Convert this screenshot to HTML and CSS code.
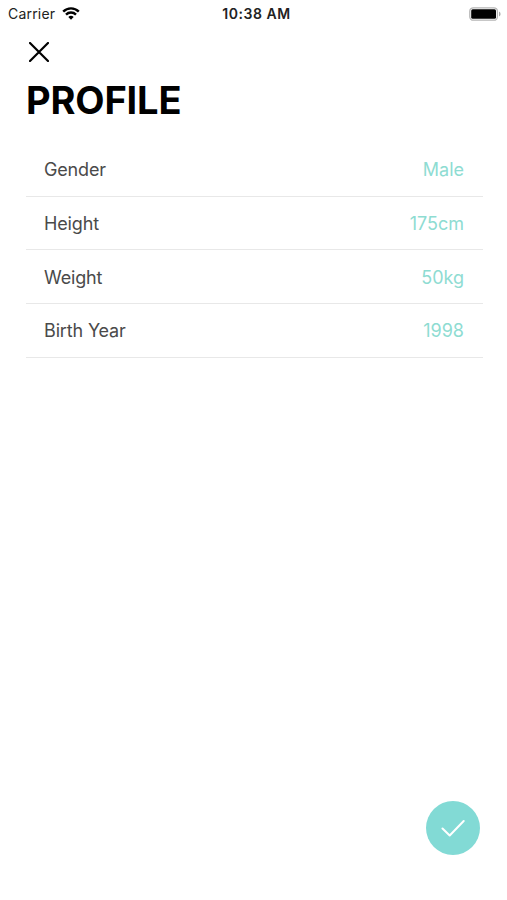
FILE: index.html
```html
<!DOCTYPE html>
<html lang="en">
<head>
    <meta charset="UTF-8">
    <meta name="viewport" content="width=device-width, initial-scale=1.0">
    <title>Profile</title>
    <link rel="stylesheet" href="styles.css">
</head>
<body>
    <div class="screen">
        <div class="status-bar">
            <div class="carrier">
                <span>Carrier</span>
                <svg class="wifi" viewBox="0 0 18 13" width="18" height="13">
                    <path d="M1.2 4.6a11 11 0 0 1 15.6 0" />
                    <path d="M4 7.6a7.1 7.1 0 0 1 10 0" />
                    <path class="wifi-dot" d="M9 12.8L6.3 9.9a4 4 0 0 1 5.4 0z" />
                </svg>
            </div>
            <div class="time">10:38 AM</div>
            <svg class="battery" viewBox="0 0 32 14" width="32" height="14">
                <rect class="battery-case" x=".8" y=".8" width="27.6" height="12.4" rx="3.5" />
                <rect x="2.2" y="2.2" width="24.8" height="9.6" rx="1.5" />
                <path class="battery-cap" d="M30 4.5q1.6 .8 1.6 2.5t-1.6 2.5z" />
            </svg>
        </div>

        <button class="close-btn" aria-label="Close">
            <svg viewBox="0 0 20 20" width="20" height="20">
                <path d="M1 1l18 18M19 1L1 19" />
            </svg>
        </button>

        <h1>PROFILE</h1>

        <ul class="profile-list">
            <li class="profile-row">
                <span class="label">Gender</span>
                <span class="value">Male</span>
            </li>
            <li class="profile-row">
                <span class="label">Height</span>
                <span class="value">175cm</span>
            </li>
            <li class="profile-row">
                <span class="label">Weight</span>
                <span class="value">50kg</span>
            </li>
            <li class="profile-row">
                <span class="label">Birth Year</span>
                <span class="value">1998</span>
            </li>
        </ul>

        <button class="save-btn" aria-label="Save">
            <svg viewBox="0 0 24 18" width="24" height="18">
                <path d="M1.5 9.5l7.2 7L22.7 2" />
            </svg>
        </button>
    </div>
</body>
</html>
```

FILE: styles.css
```css
* {
    box-sizing: border-box;
}

body {
    margin: 0;
    font-family: Inter, 'Liberation Sans', sans-serif;
    background-color: #fff;
    color: #000;
}

.screen {
    display: flex;
    flex-direction: column;
    height: 900px;
    padding: 0 24px 45px 26px;
}

/* status bar */
.status-bar {
    display: grid;
    grid-template-columns: 1fr auto 1fr;
    align-items: center;
    height: 27px;
    margin: 0 -18px;
    color: #222;
}

.carrier {
    display: flex;
    align-items: center;
    gap: 7px;
    font-size: 14px;
    letter-spacing: 0.2px;
}

.wifi {
    fill: none;
    stroke: #000;
    stroke-width: 2.4;
}

.wifi .wifi-dot {
    fill: #000;
    stroke: none;
}

.time {
    padding-left: 4px;
    font-size: 14px;
    font-weight: 600;
    letter-spacing: 0.55px;
}

.battery {
    justify-self: end;
}

.battery-case {
    fill: none;
    stroke: #b5b5b5;
    stroke-width: 1.3;
}

.battery-cap {
    fill: #aaa;
}

button {
    display: flex;
    align-items: center;
    justify-content: center;
    padding: 0;
    border: none;
    background: none;
}

button svg {
    fill: none;
    stroke-linecap: round;
    stroke-linejoin: round;
}

.close-btn {
    width: 26px;
    height: 26px;
    margin-top: 12px;
    stroke: #000;
    stroke-width: 2.2;
}

h1 {
    margin: 11px 0 0;
    font-size: 38px;
    line-height: 48px;
    font-weight: 700;
    letter-spacing: -0.15px;
}

/* profile fields */
.profile-list {
    margin: 19px 0 0;
    padding: 0;
    list-style: none;
}

.profile-row {
    display: flex;
    align-items: center;
    justify-content: space-between;
    height: 53.7px;
    padding: 1px 19px 0 18px;
    border-bottom: 1px solid #e8e8e8;
    font-size: 18px;
}

.label {
    color: #4a4a4a;
    letter-spacing: -0.15px;
}

.value {
    color: #8edcd2;
}

.save-btn {
    width: 54px;
    height: 54px;
    margin-top: auto;
    margin-right: 3px;
    align-self: flex-end;
    border-radius: 50%;
    background-color: #82dad5;
    stroke: #fff;
    stroke-width: 2;
}
```
